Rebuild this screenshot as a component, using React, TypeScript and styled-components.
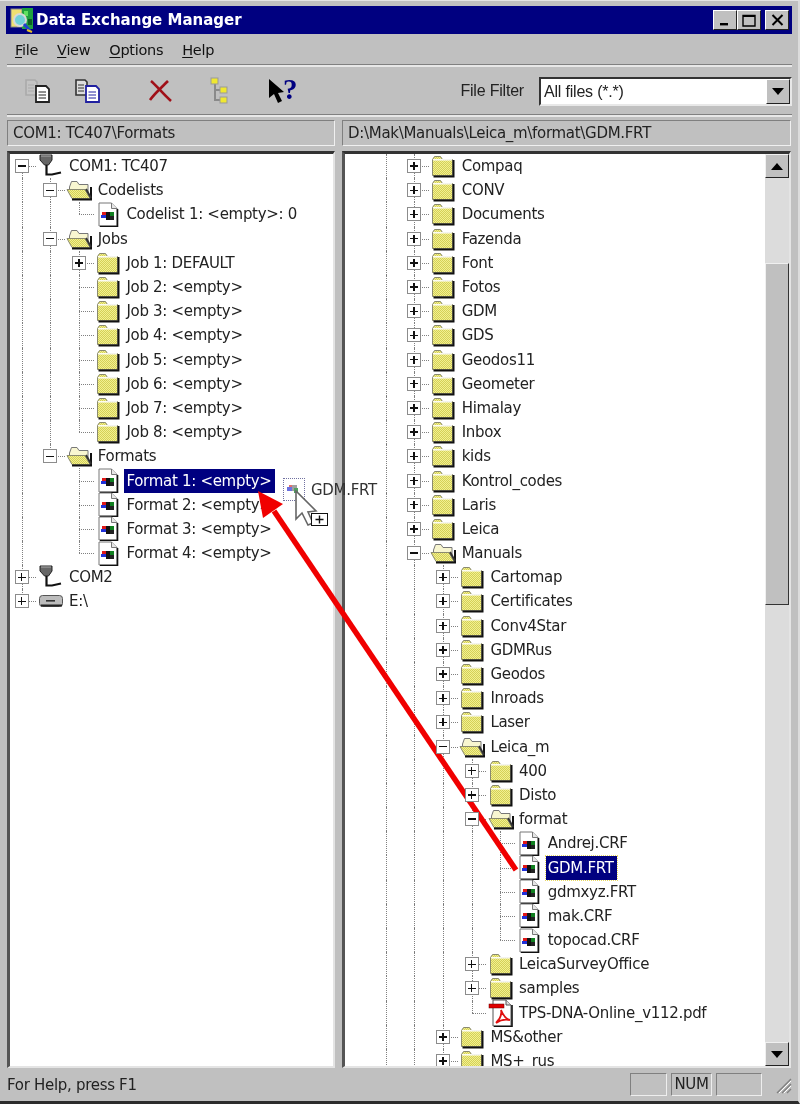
import React from 'react'
import styled, { createGlobalStyle } from 'styled-components'

type IconName = 'station' | 'drive' | 'folder' | 'open' | 'file' | 'pdf'

interface TreeRow {
  depth: number
  exp?: '+' | '-'
  icon: IconName
  label: string
  selected?: 'active' | 'focus'
}

const row = (depth: number, exp: '+' | '-' | '', icon: IconName, label: string, selected?: 'active' | 'focus'): TreeRow => ({
  depth,
  exp: exp || undefined,
  icon,
  label,
  selected,
})

const leftRows: TreeRow[] = [
  row(0, '-', 'station', 'COM1: TC407'),
  row(1, '-', 'open', 'Codelists'),
  row(2, '', 'file', 'Codelist 1: <empty>: 0'),
  row(1, '-', 'open', 'Jobs'),
  row(2, '+', 'folder', 'Job 1: DEFAULT'),
  row(2, '', 'folder', 'Job 2: <empty>'),
  row(2, '', 'folder', 'Job 3: <empty>'),
  row(2, '', 'folder', 'Job 4: <empty>'),
  row(2, '', 'folder', 'Job 5: <empty>'),
  row(2, '', 'folder', 'Job 6: <empty>'),
  row(2, '', 'folder', 'Job 7: <empty>'),
  row(2, '', 'folder', 'Job 8: <empty>'),
  row(1, '-', 'open', 'Formats'),
  row(2, '', 'file', 'Format 1: <empty>', 'active'),
  row(2, '', 'file', 'Format 2: <empty>'),
  row(2, '', 'file', 'Format 3: <empty>'),
  row(2, '', 'file', 'Format 4: <empty>'),
  row(0, '+', 'station', 'COM2'),
  row(0, '+', 'drive', 'E:\\'),
]

const closed = (depth: number, label: string) => row(depth, '+', 'folder', label)

const rightRows: TreeRow[] = [
  ...['Compaq', 'CONV', 'Documents', 'Fazenda', 'Font', 'Fotos', 'GDM', 'GDS', 'Geodos11', 'Geometer', 'Himalay', 'Inbox', 'kids', 'Kontrol_codes', 'Laris', 'Leica'].map((l) => closed(1, l)),
  row(1, '-', 'open', 'Manuals'),
  ...['Cartomap', 'Certificates', 'Conv4Star', 'GDMRus', 'Geodos', 'Inroads', 'Laser'].map((l) => closed(2, l)),
  row(2, '-', 'open', 'Leica_m'),
  closed(3, '400'),
  closed(3, 'Disto'),
  row(3, '-', 'open', 'format'),
  row(4, '', 'file', 'Andrej.CRF'),
  row(4, '', 'file', 'GDM.FRT', 'focus'),
  row(4, '', 'file', 'gdmxyz.FRT'),
  row(4, '', 'file', 'mak.CRF'),
  row(4, '', 'file', 'topocad.CRF'),
  closed(3, 'LeicaSurveyOffice'),
  closed(3, 'samples'),
  row(3, '', 'pdf', 'TPS-DNA-Online_v112.pdf'),
  closed(2, 'MS&other'),
  closed(2, 'MS+_rus'),
]

// does a sibling at this depth still follow row i? (openTo = depths going on past the visible end)
const hasNext = (rows: TreeRow[], i: number, depth: number, openTo: number) => {
  for (let j = i + 1; j < rows.length; j++) {
    if (rows[j].depth < depth) return false
    if (rows[j].depth === depth) return true
  }
  return openTo >= depth
}

const Dither = () => (
  <defs>
    <pattern id="dither" width="2" height="2" patternUnits="userSpaceOnUse">
      <rect width="2" height="2" fill="#f2f090" />
      <rect width="1" height="1" fill="#d4d058" />
      <rect x="1" y="1" width="1" height="1" fill="#d4d058" />
    </pattern>
  </defs>
)

const FolderIcon = () => (
  <svg width="24" height="24" viewBox="0 0 24 24">
    <Dither />
    <path d="M1.5 5.5 L3.5 2.5 H9.5 L11.5 5.5 H21.5 V21.5 H1.5 Z" fill="url(#dither)" stroke="#8a8a70" />
    <path d="M2 5.8 H21" stroke="#fff" strokeWidth="1.4" />
    <path d="M22.5 6 V22.5 H2.5" fill="none" stroke="#111" strokeWidth="2" />
  </svg>
)

const OpenFolderIcon = () => (
  <svg width="26" height="24" viewBox="0 0 26 24">
    <Dither />
    <path d="M3.5 9 L5.5 3.5 H11 L13 6.5 H22 V14 H3.5 Z" fill="#f8f6d0" stroke="#777" />
    <path d="M1 11.5 H19 L24 20.5 H6 Z" fill="url(#dither)" stroke="#8a8a70" />
    <path d="M6 21.5 H25 V9" fill="none" stroke="#111" strokeWidth="2" />
    <path d="M20 11 L25 20" stroke="#333" strokeWidth="2" />
  </svg>
)

const FileIcon = () => (
  <svg width="22" height="25" viewBox="0 0 22 25">
    <path d="M2 1 H14.5 L20 6.5 V24 H2 Z" fill="#fff" stroke="#777" />
    <path d="M14.5 1 V6.5 H20" fill="#e6e6e6" stroke="#777" />
    <path d="M20.5 7 V24.5 H3" fill="none" stroke="#111" strokeWidth="1.6" />
    <rect x="5" y="10" width="5" height="3" fill="#e01818" />
    <rect x="4" y="13" width="6" height="3" fill="#2030d8" />
    <rect x="9" y="10" width="4" height="8" fill="#111" />
    <rect x="13" y="10" width="4" height="4" fill="#108020" />
    <rect x="13" y="14" width="4" height="4" fill="#222" />
  </svg>
)

const PdfIcon = () => (
  <svg width="26" height="28" viewBox="0 0 26 28">
    <path d="M5 1 H18 L23 6 V27 H5 Z" fill="#fff" stroke="#555" />
    <path d="M18 1 V6 H23" fill="#ddd" stroke="#555" />
    <path d="M24 6 V27.5 H6" fill="none" stroke="#111" strokeWidth="1.6" />
    <rect x="1" y="5" width="15" height="4" fill="#e00000" stroke="#600" strokeWidth=".5" />
    <path d="M8 24 C12 20 14 15 13 11 C15 16 18 20 22 21 C17 20 12 21 8 24 Z" fill="none" stroke="#e01010" strokeWidth="1.8" />
  </svg>
)

const StationIcon = () => (
  <svg width="26" height="26" viewBox="0 0 26 26">
    <path d="M2 2 H14 V7 L10.5 12 H6.5 L2 7 Z" fill="#666" stroke="#222" />
    <path d="M3 3 H13" stroke="#aaa" />
    <path d="M8.5 12 V21.5 H14 L23 19.5" fill="none" stroke="#111" strokeWidth="2.2" />
  </svg>
)

const DriveIcon = () => (
  <svg width="26" height="20" viewBox="0 0 26 20">
    <rect x="1.5" y="4.5" width="23" height="11" rx="3" fill="#bcbcbc" stroke="#555" />
    <path d="M3 14.5 H24" stroke="#222" strokeWidth="2" />
    <rect x="8" y="9" width="9" height="1.6" fill="#333" />
  </svg>
)

const icons: Record<IconName, React.FC> = {
  station: StationIcon,
  drive: DriveIcon,
  folder: FolderIcon,
  open: OpenFolderIcon,
  file: FileIcon,
  pdf: PdfIcon,
}

const AppIcon = () => (
  <svg width="24" height="26" viewBox="0 0 24 26">
    <rect x="1" y="2" width="11" height="18" fill="#f0e070" stroke="#888" />
    <rect x="12" y="1" width="11" height="21" fill="#20a040" />
    <rect x="14" y="4" width="4" height="5" fill="#60e060" />
    <rect x="18" y="12" width="4" height="6" fill="#0c6024" />
    <circle cx="10" cy="13" r="6" fill="#70d0d8" stroke="#d8d8d8" strokeWidth="2" />
    <path d="M14 17 L20 24" stroke="#2040d0" strokeWidth="3" />
    <path d="M17 23 L22 25" stroke="#e8c020" strokeWidth="2" />
  </svg>
)

const DocPair = ({ back, front }: { back: string; front: string }) => (
  <svg width="32" height="26" viewBox="0 0 32 26">
    <path d="M2 2 H11 L13 4 V17 H2 Z" fill={back === '#aaa' ? '#c4c4c4' : '#ddd'} stroke={back} strokeWidth="1.6" />
    <path d="M4 7 H10 M4 10 H10 M4 13 H10" stroke={back} />
    <path d="M12 8 H22 L25 11 V24 H12 Z" fill="#fff" stroke={front} strokeWidth="1.8" />
    <path d="M14.5 14 H22 M14.5 17 H22 M14.5 20 H22" stroke={front} />
  </svg>
)

const DeleteIcon = () => (
  <svg width="32" height="26" viewBox="0 0 32 26">
    <path d="M7 3 C12 7 19 16 27 23 M24 3 C18 9 11 15 6 22" fill="none" stroke="#a01018" strokeWidth="2.6" />
  </svg>
)

const TreeIcon = () => (
  <svg width="32" height="28" viewBox="0 0 32 28">
    <path d="M9 5 V23 H15 M9 13 H15" fill="none" stroke="#8a8a8a" strokeWidth="2" />
    <rect x="5" y="1" width="7" height="6" fill="#f0e830" stroke="#999" />
    <rect x="14" y="10" width="7" height="6" fill="#f0e830" stroke="#999" />
    <rect x="14" y="20" width="7" height="6" fill="#f0e830" stroke="#999" />
  </svg>
)

const HelpArrow = () => (
  <svg width="18" height="28" viewBox="0 0 18 28">
    <path d="M1 2 L1 21 L6 17 L10 26 L14 24 L10 16 L16 15 Z" fill="#000" />
  </svg>
)

const Triangle = ({ up }: { up?: boolean }) => (
  <svg width="12" height="7" viewBox="0 0 12 7">
    <path d={up ? 'M6 0 L12 7 H0 Z' : 'M0 0 H12 L6 7 Z'} fill="#000" />
  </svg>
)

const TreeView: React.FC<{ rows: TreeRow[]; openTo: number }> = ({ rows, openTo }) => (
  <>
    {rows.map((r, i) => {
      const Icon = icons[r.icon]
      const levels = Array.from({ length: r.depth }, (_, d) => hasNext(rows, i, d, openTo))
      return (
        <Row key={r.label + i}>
          {levels.map((on, d) => (
            <Indent key={d} $through={on} />
          ))}
          <Indent $up={i > 0 || openTo >= 0} $down={hasNext(rows, i, r.depth, openTo)} $across>
            {r.exp && (
              <Expander>
                <ExpanderBar />
                {r.exp === '+' && <ExpanderStem />}
              </Expander>
            )}
          </Indent>
          <IconCell>
            <Icon />
          </IconCell>
          <Label $selected={r.selected}>{r.label}</Label>
        </Row>
      )
    })}
  </>
)

const App: React.FC = () => (
  <Window>
    <GlobalStyle />
    <TitleBar>
      <AppIcon />
      <Title>Data Exchange Manager</Title>
      <CaptionButtons>
        <CaptionButton>
          <svg width="12" height="12" viewBox="0 0 12 12"><rect x="1" y="9" width="8" height="2.4" fill="#000" /></svg>
        </CaptionButton>
        <CaptionButton>
          <svg width="14" height="13" viewBox="0 0 14 13"><path d="M1 1.5 H13 V12 H1 Z" fill="none" stroke="#000" strokeWidth="1.4" /><path d="M1 2 H13" stroke="#000" strokeWidth="2" /></svg>
        </CaptionButton>
        <CloseButton>
          <svg width="13" height="12" viewBox="0 0 13 12"><path d="M1.5 1 L11.5 11 M11.5 1 L1.5 11" stroke="#000" strokeWidth="2" /></svg>
        </CloseButton>
      </CaptionButtons>
    </TitleBar>
    <MenuBar>
      <MenuItem><u>F</u>ile</MenuItem>
      <MenuItem><u>V</u>iew</MenuItem>
      <MenuItem><u>O</u>ptions</MenuItem>
      <MenuItem><u>H</u>elp</MenuItem>
    </MenuBar>
    <Toolbar>
      <ToolButton $gap={0}><DocPair back="#aaa" front="#222" /></ToolButton>
      <ToolButton $gap={18}><DocPair back="#333" front="#2020a0" /></ToolButton>
      <ToolButton $gap={38}><DeleteIcon /></ToolButton>
      <ToolButton $gap={30}><TreeIcon /></ToolButton>
      <HelpButton>
        <HelpArrow />
        <HelpMark>?</HelpMark>
      </HelpButton>
      <FilterLabel>File Filter</FilterLabel>
      <Combo>
        <ComboText>All files (*.*)</ComboText>
        <ComboButton><Triangle /></ComboButton>
      </Combo>
    </Toolbar>
    <Panes>
      <PaneColumn>
        <PathBar>COM1: TC407\Formats</PathBar>
        <TreeBox>
          <TreeScroll $offset={-2.35}>
            <TreeView rows={leftRows} openTo={-1} />
          </TreeScroll>
        </TreeBox>
      </PaneColumn>
      <PaneColumn>
        <PathBar>D:\Mak\Manuals\Leica_m\format\GDM.FRT</PathBar>
        <TreeBox>
          <TreeScroll $offset={26.65}>
            <TreeView rows={rightRows} openTo={2} />
          </TreeScroll>
          <ScrollBar>
            <ScrollButton><Triangle up /></ScrollButton>
            <ScrollTrack $size={85} />
            <ScrollThumb />
            <ScrollTrack />
            <ScrollButton><Triangle /></ScrollButton>
          </ScrollBar>
        </TreeBox>
      </PaneColumn>
    </Panes>
    <StatusBar>
      <StatusText>For Help, press F1</StatusText>
      <StatusField $width={37} />
      <StatusField $width={41}>NUM</StatusField>
      <StatusField $width={46} />
      <Grip>
        <svg width="18" height="18" viewBox="0 0 18 18">
          <path d="M17 3 L3 17 M17 8 L8 17 M17 13 L13 17" stroke="#808080" strokeWidth="1.4" />
          <path d="M17 5 L5 17 M17 10 L10 17" stroke="#fff" />
        </svg>
      </Grip>
    </StatusBar>
    <DragGhost>
      <GhostFile>
        <svg width="20" height="20" viewBox="0 0 20 20">
          <rect x="3" y="8" width="5" height="4" fill="#6a70e0" />
          <rect x="8" y="6" width="5" height="6" fill="#a0a0a0" />
          <rect x="10" y="9" width="4" height="5" fill="#50a060" />
          <rect x="5" y="6" width="3" height="2" fill="#e07070" />
        </svg>
      </GhostFile>
      <GhostLabel>GDM.FRT</GhostLabel>
    </DragGhost>
    <DragCursor>
      <svg width="36" height="40" viewBox="0 0 36 40">
        <path d="M2 1 V29 L8 23 L14 35 L19 33 L14 22 L22 21 Z" fill="#fff" stroke="#666" strokeWidth="1.6" />
        <rect x="17.5" y="23.5" width="16" height="12" fill="#fff" stroke="#111" />
        <path d="M21.5 29.5 H29.5 M25.5 25.5 V33.5" stroke="#111" strokeWidth="1.4" />
      </svg>
    </DragCursor>
    <ArrowOverlay width="800" height="1107" viewBox="0 0 800 1107">
      <path d="M516 870 L274 511" stroke="#f00000" strokeWidth="5.5" fill="none" />
      <path d="M258 491 L283 504 L263 518 Z" fill="#f00000" />
    </ArrowOverlay>
  </Window>
)

export default App

const GlobalStyle = createGlobalStyle`
  html, body {
    margin: 0;
    padding: 0;
    background: #fff;
  }
  * {
    box-sizing: border-box;
  }
`

const Window = styled.div`
  position: relative;
  display: flex;
  flex-direction: column;
  width: 800px;
  height: 1104px;
  padding: 5px 6px 0 7px;
  background: #c0c0c0;
  border-top: 1px solid #e4e4e4;
  border-bottom: 3px solid #2c2c2c;
  border-right: 2px solid #dcdcdc;
  font-family: 'DejaVu Sans', sans-serif;
  font-size: 15px;
  letter-spacing: -0.3px;
  color: #111;
  filter: blur(0.5px);
  overflow: hidden;
`

const TitleBar = styled.div`
  display: flex;
  align-items: center;
  flex: none;
  height: 28px;
  margin-left: -1px;
  padding: 0 3px 0 4px;
  background: #000080;
`

const Title = styled.div`
  margin-left: 2px;
  font-weight: bold;
  font-size: 15px;
  letter-spacing: 0;
  color: #fff;
`

const CaptionButtons = styled.div`
  display: flex;
  margin-left: auto;
`

const CaptionButton = styled.div`
  display: flex;
  align-items: center;
  justify-content: center;
  width: 24px;
  height: 20px;
  background: #c0c0c0;
  border: 1px solid;
  border-color: #fff #222 #222 #fff;
`

const CloseButton = styled(CaptionButton)`
  margin-left: 4px;
`

const MenuBar = styled.div`
  display: flex;
  align-items: center;
  flex: none;
  height: 31px;
  padding-left: 8px;
  gap: 19px;
`

const MenuItem = styled.span`
  font-size: 14.5px;
  letter-spacing: -0.3px;
  u {
    text-underline-offset: 2px;
  }
`

const Toolbar = styled.div`
  display: flex;
  align-items: center;
  flex: none;
  height: 50px;
  padding-left: 17px;
  border-top: 2px solid #e8e8e8;
  box-shadow: 0 -1px 0 #808080;
`

const ToolButton = styled.div<{ $gap: number }>`
  display: flex;
  align-items: center;
  justify-content: center;
  width: 32px;
  height: 32px;
  margin-left: ${({ $gap }) => $gap}px;
`

const HelpButton = styled.div`
  display: flex;
  align-items: center;
  height: 34px;
  margin-left: 30px;
`

const HelpMark = styled.span`
  margin-left: -3px;
  margin-top: -5px;
  font-family: 'Liberation Serif', serif;
  font-weight: bold;
  font-size: 29px;
  line-height: 32px;
  letter-spacing: 0;
  color: #000080;
`

const FilterLabel = styled.span`
  margin-left: auto;
  margin-right: 15px;
  font-family: 'Liberation Sans', sans-serif;
  font-size: 16px;
  letter-spacing: -0.2px;
  color: #222;
`

const Combo = styled.div`
  display: flex;
  align-items: stretch;
  width: 253px;
  height: 29px;
  background: #fff;
  border: 2px solid;
  border-color: #333 #e8e8e8 #e8e8e8 #333;
`

const ComboText = styled.span`
  flex: 1;
  padding-left: 3px;
  font-family: 'Liberation Sans', sans-serif;
  font-size: 16px;
  letter-spacing: -0.2px;
  line-height: 26px;
  color: #222;
`

const ComboButton = styled.div`
  display: flex;
  align-items: center;
  justify-content: center;
  width: 24px;
  background: #c0c0c0;
  border: 1px solid;
  border-color: #fff #222 #222 #fff;
`

const Panes = styled.div`
  display: grid;
  grid-template-columns: 328px 449px;
  gap: 7px;
  flex: 1;
  min-height: 0;
  padding-top: 3px;
  border-top: 2px solid #e8e8e8;
  box-shadow: 0 -1px 0 #808080;
`

const PaneColumn = styled.div`
  display: flex;
  flex-direction: column;
  min-height: 0;
  min-width: 0;
`

const PathBar = styled.div`
  flex: none;
  height: 26px;
  padding-left: 5px;
  line-height: 24px;
  white-space: nowrap;
  color: #222;
  border: 1px solid;
  border-color: #808080 #f0f0f0 #f0f0f0 #808080;
`

const TreeBox = styled.div`
  display: flex;
  flex: 1;
  min-height: 0;
  margin-top: 5px;
  background: #fff;
  border-top: 3px solid #333;
  border-left: 3px solid #555;
  border-right: 2px solid #e4e4e4;
  border-bottom: 2px solid #e4e4e4;
  overflow: hidden;
`

const TreeScroll = styled.div<{ $offset: number }>`
  flex: 1;
  min-width: 0;
  margin-left: ${({ $offset }) => Math.min($offset, 0)}px;
  padding-left: ${({ $offset }) => Math.max($offset, 0)}px;
  overflow: hidden;
`

const Row = styled.div`
  display: flex;
  align-items: center;
  height: 24.2px;
  white-space: nowrap;
`

const Indent = styled.div<{ $through?: boolean; $up?: boolean; $down?: boolean; $across?: boolean }>`
  position: relative;
  display: flex;
  align-items: center;
  justify-content: center;
  flex: none;
  width: 28.7px;
  height: 100%;

  &::before {
    content: '';
    position: absolute;
    left: 14px;
    top: ${({ $through, $up }) => ($through || $up ? '0' : '50%')};
    bottom: ${({ $through, $down }) => ($through || $down ? '0' : '50%')};
    border-left: ${({ $through, $up, $down }) => ($through || $up || $down ? '1px dotted #808080' : 'none')};
  }

  &::after {
    content: '';
    position: absolute;
    left: 14px;
    right: 0;
    top: 50%;
    border-top: ${({ $across }) => ($across ? '1px dotted #808080' : 'none')};
  }
`

const Expander = styled.div`
  position: relative;
  z-index: 1;
  display: flex;
  align-items: center;
  justify-content: center;
  width: 14px;
  height: 14px;
  margin-left: -1px;
  background: #fff;
  border: 1px solid #8c8c8c;
`

const ExpanderBar = styled.span`
  width: 8px;
  height: 1.4px;
  background: #111;
`

const ExpanderStem = styled.span`
  position: absolute;
  width: 1.4px;
  height: 8px;
  background: #111;
`

const IconCell = styled.div`
  display: flex;
  align-items: center;
  justify-content: center;
  flex: none;
  width: 28.7px;
  height: 100%;
`

const Label = styled.span<{ $selected?: 'active' | 'focus' }>`
  margin-left: 2px;
  padding: 2px 3px 2px 2px;
  line-height: 20px;
  color: ${({ $selected }) => ($selected ? '#fff' : '#222')};
  background: ${({ $selected }) => ($selected ? '#000080' : 'transparent')};
  outline: ${({ $selected }) => ($selected === 'focus' ? '1.5px dotted #e8d860' : 'none')};
`

const ScrollBar = styled.div`
  display: flex;
  flex-direction: column;
  flex: none;
  width: 24px;
`

const ScrollButton = styled.div`
  display: flex;
  align-items: center;
  justify-content: center;
  flex: none;
  height: 24px;
  background: #c0c0c0;
  border: 1px solid;
  border-color: #f0f0f0 #222 #222 #f0f0f0;
`

const ScrollTrack = styled.div<{ $size?: number }>`
  flex: ${({ $size }) => ($size ? `none` : '1')};
  height: ${({ $size }) => ($size ? `${$size}px` : 'auto')};
  background-color: #dcdcdc;
  background-image: radial-gradient(#f4f4f4 0.6px, transparent 0.7px);
  background-size: 4px 4px;
`

const ScrollThumb = styled.div`
  flex: none;
  height: 342px;
  background: #c0c0c0;
  border: 1px solid;
  border-color: #f0f0f0 #333 #333 #f0f0f0;
`

const StatusBar = styled.div`
  display: flex;
  align-items: center;
  flex: none;
  height: 33px;
  gap: 4px;
`

const StatusText = styled.span`
  margin-right: auto;
  color: #222;
`

const StatusField = styled.div<{ $width: number }>`
  width: ${({ $width }) => $width}px;
  height: 23px;
  line-height: 21px;
  text-align: center;
  color: #222;
  border: 1px solid;
  border-color: #808080 #eee #eee #808080;
`

const Grip = styled.div`
  align-self: flex-end;
  width: 26px;
  padding: 0 0 3px 8px;
`

const DragGhost = styled.div`
  position: absolute;
  left: 283px;
  top: 477px;
  display: flex;
  align-items: center;
  gap: 6px;
`

const GhostFile = styled.div`
  width: 22px;
  height: 23px;
  border: 1px dotted #7070a0;
`

const GhostLabel = styled.span`
  color: #333;
`

const DragCursor = styled.div`
  position: absolute;
  left: 294px;
  top: 489px;
`

const ArrowOverlay = styled.svg`
  position: absolute;
  left: 0;
  top: -1px;
  pointer-events: none;
`
